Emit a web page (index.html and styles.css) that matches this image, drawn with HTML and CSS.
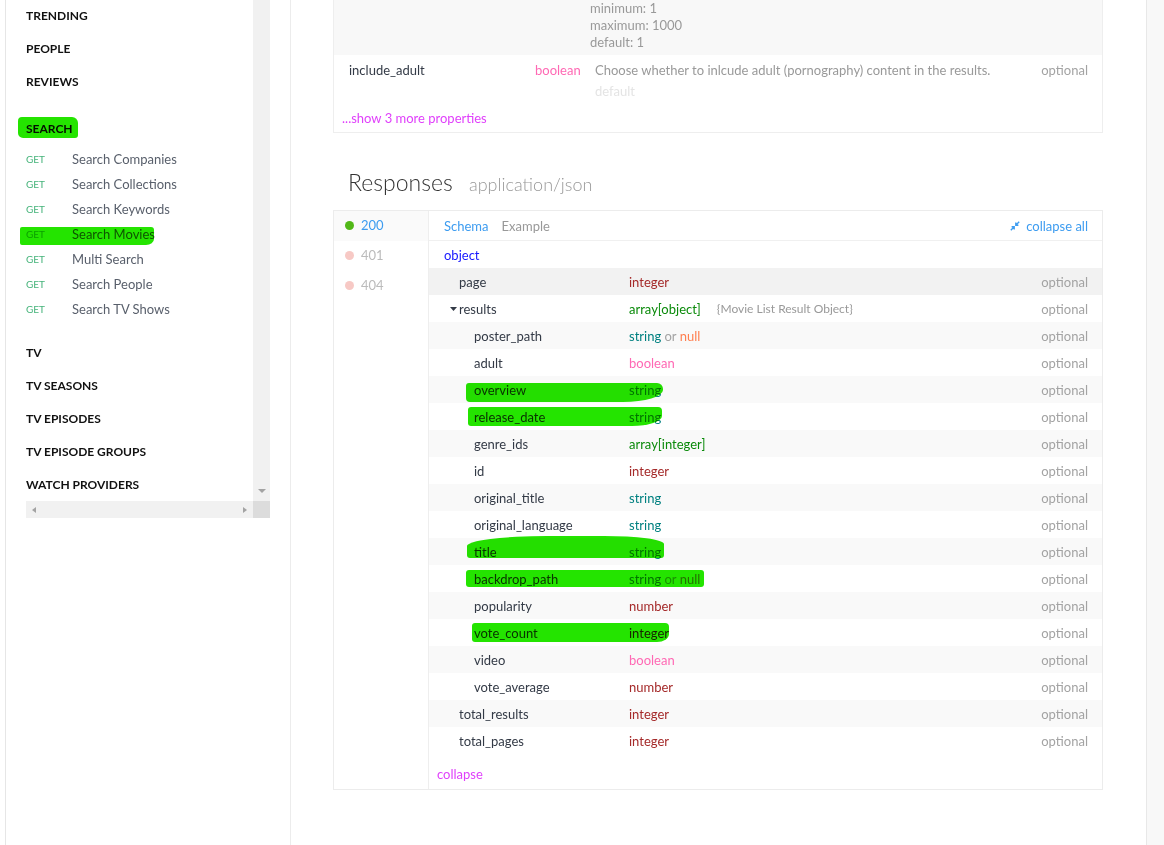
FILE: index.html
```html
<!DOCTYPE html>
<html lang="en">
<head>
<meta charset="utf-8">
<title>Search Movies</title>
<link rel="stylesheet" href="styles.css">
</head>
<body>
<div class="page">
  <div class="edge"></div>
  <aside class="sidebar">
    <div class="scroller">
      <div class="scroll-row">
        <nav class="menu">
          <div class="head">TRENDING</div>
          <div class="head">PEOPLE</div>
          <div class="head">REVIEWS</div>
          <div class="group">
            <div class="head">SEARCH</div>
            <ul class="items">
              <li class="item"><span class="get">GET</span><span class="iname">Search Companies</span></li>
              <li class="item"><span class="get">GET</span><span class="iname">Search Collections</span></li>
              <li class="item"><span class="get">GET</span><span class="iname">Search Keywords</span></li>
              <li class="item"><span class="get">GET</span><span class="iname">Search Movies</span></li>
              <li class="item"><span class="get">GET</span><span class="iname">Multi Search</span></li>
              <li class="item"><span class="get">GET</span><span class="iname">Search People</span></li>
              <li class="item"><span class="get">GET</span><span class="iname">Search TV Shows</span></li>
            </ul>
          </div>
          <div class="head">TV</div>
          <div class="head">TV SEASONS</div>
          <div class="head">TV EPISODES</div>
          <div class="head">TV EPISODE GROUPS</div>
          <div class="head">WATCH PROVIDERS</div>
        </nav>
        <div class="vtrack"><span class="arr-down"></span></div>
      </div>
      <div class="hbar">
        <div class="htrack"><span class="arr-left"></span><span class="arr-right"></span></div>
        <div class="corner"></div>
      </div>
    </div>
  </aside>

  <main class="main">
    <div class="params">
      <div class="p-sub">
        <div>minimum: 1</div>
        <div>maximum: 1000</div>
        <div>default: 1</div>
      </div>
      <div class="p-row">
        <div class="p-name">include_adult</div>
        <div class="p-type t-bool">boolean</div>
        <div class="p-desc">
          <div>Choose whether to inlcude adult (pornography) content in the results.</div>
          <div class="p-default">default</div>
        </div>
        <div class="opt">optional</div>
      </div>
      <div class="more">...show 3 more properties</div>
    </div>

    <h2 class="resp-title">Responses <span class="mime">application/json</span></h2>

    <div class="resp">
      <div class="codes">
        <div class="code active"><span class="dot"></span>200</div>
        <div class="code"><span class="dot"></span>401</div>
        <div class="code"><span class="dot"></span>404</div>
      </div>
      <div class="schema">
        <div class="tabs">
          <span class="tab on">Schema</span>
          <span class="tab">Example</span>
          <span class="collapse-all">
            <svg class="ico" width="10" height="10" viewBox="0 0 10 10" aria-hidden="true">
              <path d="M0.8 9.2 L4.2 5.8 M1.6 5.8 H4.2 V8.4 M9.2 0.8 L5.8 4.2 M5.8 1.6 V4.2 H8.4" fill="none" stroke="#3d9cf0" stroke-width="1.4"/>
            </svg>collapse all
          </span>
        </div>
        <div class="obj">object</div>
        <div class="rows">
          <div class="row hover"><div class="rn l1">page</div><div class="rt"><span class="t-int">integer</span></div><div class="opt">optional</div></div>
          <div class="row"><div class="rn l1"><svg class="caret" width="7" height="4" viewBox="0 0 7 4" aria-hidden="true"><path d="M0 0 H7 L3.5 4 Z" fill="#333a46"/></svg>results</div><div class="rt"><span class="t-arr">array[object]</span><span class="ref">{Movie List Result Object}</span></div><div class="opt">optional</div></div>
          <div class="row"><div class="rn l2">poster_path</div><div class="rt"><span class="t-str">string</span> <span class="t-or">or</span> <span class="t-null">null</span></div><div class="opt">optional</div></div>
          <div class="row"><div class="rn l2">adult</div><div class="rt"><span class="t-bool">boolean</span></div><div class="opt">optional</div></div>
          <div class="row"><div class="rn l2">overview</div><div class="rt"><span class="t-str">string</span></div><div class="opt">optional</div></div>
          <div class="row"><div class="rn l2">release_date</div><div class="rt"><span class="t-str">string</span></div><div class="opt">optional</div></div>
          <div class="row"><div class="rn l2">genre_ids</div><div class="rt"><span class="t-arr">array[integer]</span></div><div class="opt">optional</div></div>
          <div class="row"><div class="rn l2">id</div><div class="rt"><span class="t-int">integer</span></div><div class="opt">optional</div></div>
          <div class="row"><div class="rn l2">original_title</div><div class="rt"><span class="t-str">string</span></div><div class="opt">optional</div></div>
          <div class="row"><div class="rn l2">original_language</div><div class="rt"><span class="t-str">string</span></div><div class="opt">optional</div></div>
          <div class="row"><div class="rn l2">title</div><div class="rt"><span class="t-str">string</span></div><div class="opt">optional</div></div>
          <div class="row"><div class="rn l2">backdrop_path</div><div class="rt"><span class="t-str">string</span> <span class="t-or">or</span> <span class="t-null">null</span></div><div class="opt">optional</div></div>
          <div class="row"><div class="rn l2">popularity</div><div class="rt"><span class="t-int">number</span></div><div class="opt">optional</div></div>
          <div class="row"><div class="rn l2">vote_count</div><div class="rt"><span class="t-int">integer</span></div><div class="opt">optional</div></div>
          <div class="row"><div class="rn l2">video</div><div class="rt"><span class="t-bool">boolean</span></div><div class="opt">optional</div></div>
          <div class="row"><div class="rn l2">vote_average</div><div class="rt"><span class="t-int">number</span></div><div class="opt">optional</div></div>
          <div class="row"><div class="rn l1">total_results</div><div class="rt"><span class="t-int">integer</span></div><div class="opt">optional</div></div>
          <div class="row"><div class="rn l1">total_pages</div><div class="rt"><span class="t-int">integer</span></div><div class="opt">optional</div></div>
        </div>
        <div class="collapse">collapse</div>
      </div>
    </div>
  </main>

  <div class="rstrip"></div>

  <div class="marks" aria-hidden="true">
    <div class="mk mk-search"></div>
    <div class="mk mk-movies"></div>
    <div class="mk mk-overview"></div>
    <div class="mk mk-release"></div>
    <div class="mk mk-title"></div>
    <div class="mk mk-backdrop"></div>
    <div class="mk mk-vote"></div>
  </div>
</div>
</body>
</html>
```

FILE: styles.css
```css
* { box-sizing: border-box; }

html, body {
  margin: 0;
  padding: 0;
  background: #fff;
}

body {
  font-family: Lato, "Open Sans", "Liberation Sans", sans-serif;
  font-size: 13px;
  color: #333a46;
  overflow: hidden;
}

.page {
  position: relative;
  display: flex;
  width: 1164px;
  height: 845px;
}

/* ---------- left frame & sidebar ---------- */
.edge {
  width: 6px;
  border-right: 1px solid #e6e6e6;
}

.sidebar {
  width: 285px;
  padding-left: 20px;
  border-right: 1px solid #ececec;
}

.scroller { width: 244px; }

.scroll-row {
  display: flex;
  height: 501px;
}

.menu {
  width: 227px;
  overflow: hidden;
  padding-top: 1px;
}

.head {
  font-weight: 700;
  font-size: 12px;
  color: #111;
  line-height: 30px;
  margin-bottom: 3px;
}

.group { margin-top: 17px; }
.group .head { margin-bottom: 2px; }

.items {
  list-style: none;
  margin: 0 0 17px;
  padding: 0;
}

.item {
  display: flex;
  align-items: center;
  height: 25px;
}

.get {
  width: 46px;
  font-size: 10px;
  color: #45b37a;
}

.iname { color: #585f6b; }

.vtrack {
  width: 17px;
  background: #f1f1f1;
  display: flex;
  flex-direction: column;
  justify-content: flex-end;
  align-items: center;
  padding-bottom: 8px;
}

.arr-down {
  width: 0; height: 0;
  border-left: 4px solid transparent;
  border-right: 4px solid transparent;
  border-top: 4px solid #a3a3a3;
}

.hbar {
  display: flex;
  height: 17px;
}

.htrack {
  width: 227px;
  background: #f1f1f1;
  display: flex;
  justify-content: space-between;
  align-items: center;
  padding: 0 6px 0 6px;
}

.arr-left, .arr-right {
  width: 0; height: 0;
  border-top: 3.5px solid transparent;
  border-bottom: 3.5px solid transparent;
}
.arr-left { border-right: 4px solid #a3a3a3; }
.arr-right { border-left: 4px solid #a3a3a3; }

.corner {
  width: 17px;
  background: #dcdcdc;
}

/* ---------- main column ---------- */
.main {
  width: 856px;
  padding-left: 42px;
  border-right: 1px solid #e8e8e8;
}

.rstrip {
  width: 17px;
  background: #f8f8f8;
}

/* parameters box (scrolled, top cut off) */
.params {
  width: 770px;
  border: 1px solid #eeeeee;
  border-top: 0;
}

.p-sub {
  height: 55px;
  background: #f8f8f8;
  padding-left: 256px;
  line-height: 17px;
  color: #999;
}

.p-row {
  display: flex;
  padding: 8px 14px 0 15px;
  line-height: 15px;
}

.p-name { width: 186px; }
.p-type { width: 60px; }
.p-desc { flex: 1; color: #999; }
.p-default { margin-top: 6px; color: #e4e4e4; }

.more {
  padding: 12px 0 6px 8px;
  line-height: 15px;
  color: #e040fb;
}

.opt { color: #a3a3a3; }

/* responses */
.resp-title {
  margin: 34px 0 11px 15px;
  font-size: 23px;
  font-weight: 300;
  line-height: 30px;
  color: #333;
}

.mime {
  margin-left: 10px;
  font-size: 18px;
  font-weight: 300;
  color: #999;
}

.resp {
  display: flex;
  width: 770px;
  border: 1px solid #ececec;
}

.codes {
  width: 95px;
  border-right: 1px solid #eeeeee;
}

.code {
  display: flex;
  align-items: center;
  height: 30px;
  padding: 0 0 2px 11px;
  color: #bbbbbb;
}

.code.active {
  background: #fafafa;
  color: #3d9cf0;
}

.dot {
  width: 9px;
  height: 9px;
  border-radius: 50%;
  background: #f7c9c5;
  margin-right: 7px;
}
.code.active .dot { background: #52b818; }

.schema { flex: 1; }

.tabs {
  display: flex;
  align-items: center;
  height: 30px;
  padding: 0 14px 0 15px;
  border-bottom: 1px solid #f0f0f0;
}

.tab {
  margin-right: 13px;
  color: #999;
}
.tab.on { color: #3d9cf0; }

.collapse-all {
  margin-left: auto;
  display: flex;
  align-items: center;
  color: #3d9cf0;
}
.ico { margin-right: 6px; }

.obj {
  height: 27px;
  line-height: 28px;
  padding-left: 15px;
  color: #1717ff;
}

.row {
  display: flex;
  align-items: center;
  height: 27px;
  padding-right: 14px;
}
.row:nth-child(odd) { background: #f9f9f9; }
.row.hover { background: #f2f2f2; }

.rn {
  width: 200px;
  display: flex;
  align-items: center;
}
.rn.l1 { padding-left: 30px; }
.rn.l2 { padding-left: 45px; }

.caret {
  margin-left: -9px;
  margin-right: 2px;
}

.rt { flex: 1; }

.ref {
  margin-left: 16px;
  font-size: 12px;
  color: #999;
  position: relative;
  top: -1px;
}

.t-int { color: #a52a2a; }
.t-arr { color: #0a8a0a; }
.t-str { color: #008080; }
.t-or { color: #a3a3a3; }
.t-null { color: #ff7f50; }
.t-bool { color: #ff69b4; }

.collapse {
  padding: 12px 0 7px 8px;
  line-height: 16px;
  color: #e040fb;
}

/* ---------- marker highlights drawn over the screenshot ---------- */
.marks {
  position: absolute;
  inset: 0;
  pointer-events: none;
}

.mk {
  position: absolute;
  background: #24e400;
  mix-blend-mode: multiply;
}

.mk-search   { left: 18px;  top: 117px; width: 60px;  height: 21px; border-radius: 4px 6px 3px 5px; }
.mk-movies   { left: 20px;  top: 227px; width: 134px; height: 18px; border-radius: 2px 3px 8px 2px / 2px 3px 6px 2px; }
.mk-overview { left: 466px; top: 383px; width: 197px; height: 19px; border-radius: 3px 6px 40px 4px / 3px 6px 12px 4px; }
.mk-release  { left: 468px; top: 407px; width: 194px; height: 19px; border-radius: 3px 4px 30px 3px / 3px 4px 10px 3px; }
.mk-title    { left: 467px; top: 536px; width: 197px; height: 22px; border-radius: 80px 60px 3px 3px / 10px 8px 3px 3px; }
.mk-backdrop { left: 466px; top: 570px; width: 238px; height: 17px; border-radius: 3px; }
.mk-vote     { left: 472px; top: 623px; width: 197px; height: 19px; border-radius: 3px 4px 12px 3px / 3px 4px 8px 3px; }
```
